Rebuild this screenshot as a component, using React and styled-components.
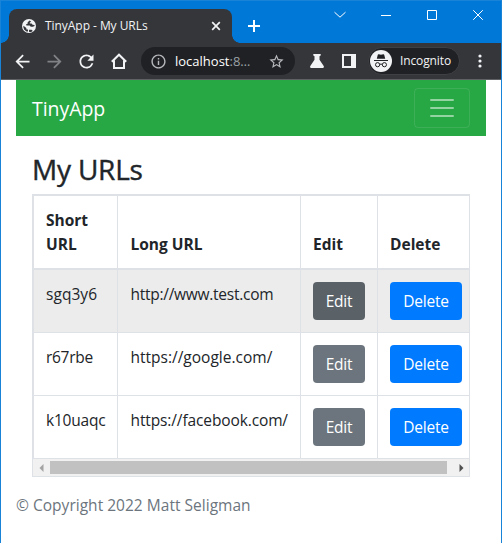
import React from 'react';
import styled, { createGlobalStyle } from 'styled-components';
import { MdArrowBack, MdArrowForward, MdInfoOutline, MdRefresh, MdStarBorder } from 'react-icons/md';

const GlobalStyle = createGlobalStyle`
  *, *::before, *::after { box-sizing: border-box; }
  body {
    margin: 0;
    overflow: hidden;
    font-family: "Open Sans", "Noto Sans", sans-serif;
    color: #212529;
    background: #fff;
  }
  svg { display: block; flex: none; }
`;

const Window = styled.div`
  display: flex;
  flex-direction: column;
  height: 543px;
  width: 502px;
  border: 1px solid #1883d7;
  border-bottom: 0;
`;

const TitleBar = styled.header`
  display: flex;
  height: 42px;
  flex: none;
  padding: 8px 0 0 8px;
  background: #0078d7;
`;

const Tab = styled.div`
  position: relative;
  display: flex;
  align-items: center;
  width: 223px;
  height: 34px;
  padding: 0 11px 0 13px;
  border-radius: 8px 8px 0 0;
  background: #35363a;
  color: #f1f3f4;

  &::before, &::after {
    content: "";
    position: absolute;
    bottom: 0;
    width: 8px;
    height: 8px;
  }
  &::before {
    left: -8px;
    background: radial-gradient(circle at 0 0, transparent 7.5px, #35363a 8px);
  }
  &::after {
    right: -8px;
    background: radial-gradient(circle at 100% 0, transparent 7.5px, #35363a 8px);
  }
`;

const TabTitle = styled.span`
  flex: 1;
  margin-left: 9px;
  font-size: 12px;
  line-height: 16px;
  letter-spacing: -0.05px;
  white-space: nowrap;
`;

const NewTab = styled.div`
  display: flex;
  align-items: center;
  height: 34px;
  margin-left: 16px;
`;

const WindowControls = styled.div`
  display: flex;
  gap: 34px;
  margin: -1px 0 0 auto;
  padding: 0 17px 0 0;
  height: 14px;
  align-items: center;
`;

const Toolbar = styled.div`
  display: flex;
  align-items: center;
  flex: none;
  height: 37px;
  padding-left: 10.5px;
  border-bottom: 1px solid #606164;
  background: #35363a;
  color: #f1f3f4;
`;

const NavIcons = styled.div`
  display: flex;
  align-items: center;
  gap: 10px;
`;

const ToolIcon = styled.span`
  display: grid;
  place-items: center;
  width: 22px;
  height: 22px;
  color: ${(p) => (p.$dim ? '#808286' : '#f1f3f4')};
`;

const AddressBar = styled.div`
  display: flex;
  align-items: center;
  width: 154px;
  height: 28px;
  margin-left: 11.5px;
  padding: 0 10px 0 9px;
  border-radius: 14px;
  background: #202124;
  color: #b6b9bd;
`;

const Address = styled.span`
  flex: 1;
  margin-left: 8px;
  font-size: 13px;
  line-height: 18px;
  color: #9aa0a6;
  white-space: nowrap;
  b { font-weight: 400; color: #fff; }
`;

const Extensions = styled.div`
  display: flex;
  align-items: center;
  gap: 18px;
  margin-left: 15px;
`;

const IncognitoPill = styled.div`
  display: flex;
  align-items: center;
  gap: 8px;
  width: 92px;
  height: 28px;
  margin-left: 12px;
  padding-left: 1px;
  border: 1px solid #3f4044;
  border-radius: 14px;
  background: #202124;
  font-size: 12px;
  line-height: 16px;
  letter-spacing: -0.12px;
`;

const MoreMenu = styled.span`
  margin-left: 17.5px;
`;

const Page = styled.main`
  flex: 1;
  padding: 0 15px;
  background: #fff;
`;

const Navbar = styled.nav`
  display: flex;
  align-items: center;
  justify-content: space-between;
  height: 56px;
  padding: 0 16px;
  background: #28a745;
`;

const Brand = styled.span`
  padding-top: 1px;
  color: #fff;
  font-size: 19.5px;
  line-height: 31px;
  letter-spacing: -0.05px;
`;

const Toggler = styled.button`
  display: grid;
  place-items: center;
  width: 56px;
  height: 40px;
  padding: 0;
  border: 1px solid rgba(255, 255, 255, 0.1);
  border-radius: 4px;
  background: transparent;
`;

const Content = styled.section`
  padding: 16px 16px 0;
`;

const Heading = styled.h3`
  margin: 0 0 8px;
  font-size: 28px;
  font-weight: 500;
  line-height: 34px;
  letter-spacing: -0.2px;
  -webkit-text-stroke: 0.4px currentColor;
`;

const TableFrame = styled.div`
  border: 1px solid #dee2e6;
`;

const Table = styled.div`
  border: solid #dee2e6;
  border-width: 1px 0 0 1px;
`;

const Row = styled.div`
  display: grid;
  grid-template-columns: 84px 183px 77px 91px;
  height: ${(p) => (p.$head ? 74 : 63)}px;
  border-bottom: ${(p) => (p.$head ? 2 : 1)}px solid #dee2e6;
  background: ${(p) => (p.$hover ? '#ececec' : '#fff')};
`;

const Cell = styled.div`
  padding: 12px 0 0 12px;
  border-right: 1px solid #dee2e6;
  font-size: 15.5px;
  line-height: 24px;
  letter-spacing: ${(p) => p.$track || 0}px;
  white-space: nowrap;
  &:nth-child(2) { padding-left: 12.5px; }
  &:last-child { border-right: 0; }
`;

const HeadCell = styled(Cell)`
  display: flex;
  align-items: flex-end;
  padding-bottom: 12px;
  font-weight: 700;
  white-space: normal;
`;

const Button = styled.button`
  display: block;
  width: ${(p) => (p.$primary ? 72 : 52)}px;
  height: 38px;
  padding: 0;
  border: 0;
  border-radius: 4px;
  background: ${(p) => (p.$primary ? '#007bff' : p.$active ? '#5a6268' : '#6c757d')};
  color: #fff;
  font: inherit;
  letter-spacing: -0.2px;
`;

const Scrollbar = styled.div`
  display: flex;
  align-items: center;
  height: 17px;
  padding: 0 5px 0 6px;
  background: #f1f1f1;
`;

const Thumb = styled.div`
  width: 397px;
  height: 13px;
  margin: 0 auto 0 6px;
  background: #c1c1c1;
`;

const Footer = styled.footer`
  margin-top: 16px;
  color: #6c757d;
  font-size: 15.5px;
  line-height: 24px;
  letter-spacing: 0.02px;
`;

const GlobeIcon = () => (
  <svg width="14" height="14" viewBox="0 0 14 14">
    <circle cx="7" cy="7" r="7" fill="#f1f3f4" />
    <path
      fill="#35363a"
      d="M7.6 1.6L5.7 3.2l-.1 1.5-1.5.6.3 1.2h3.2l1.2 1.3h2.1l1.6-.7V5.9l-1.9-.2-1-1.2-1.8.1V3.4l1.4-.6zM1.5 6.7l2.8 2.2.2 1.5 1.5.2v2H4.4L2.1 10.4 1.3 8zM7 10.8h2.6l1.2 1.1-1.7 1-2 .2z"
    />
  </svg>
);

const CloseTabIcon = () => (
  <svg width="10" height="10" viewBox="0 0 10 10" stroke="#f1f3f4" strokeWidth="1.7">
    <path d="M1.2 1.2l7.6 7.6M8.8 1.2L1.2 8.8" />
  </svg>
);

const PlusIcon = () => (
  <svg width="12" height="12" viewBox="0 0 12 12" stroke="#fff" strokeWidth="2">
    <path d="M0 6h12M6 0v12" />
  </svg>
);

const HomeIcon = () => (
  <svg width="16" height="16" viewBox="0 0 16 16" fill="none" stroke="currentColor" strokeWidth="2">
    <path d="M.8 8.8L8 1.7l7.2 7.1M3 7.5V15h10V7.5" />
  </svg>
);

const FlaskIcon = () => (
  <svg width="14" height="14" viewBox="0 0 14 14" fill="#f1f3f4">
    <path d="M3.3 0h7.4v1.5L9.5 2.2v3.6l4.2 6.1c.6 1-.1 2.1-1.3 2.1H1.6C.4 14-.3 12.9.3 11.9l4.2-6.1V2.2l-1.2-.7z" />
  </svg>
);

const PanelIcon = () => (
  <svg width="14" height="14" viewBox="0 0 14 14">
    <path fill="#f1f3f4" fillRule="evenodd" d="M0 0h14v14H0zM2 2v10h7V2z" />
  </svg>
);

const IncognitoIcon = () => (
  <svg width="22" height="22" viewBox="0 0 22 22">
    <circle cx="11" cy="11" r="11" fill="#f1f3f4" />
    <path fill="#202124" d="M7.8 4.8q.3-.8 1.1-.5l2.1.5 2.1-.5q.8-.3 1.1.5L15.2 8.8H6.8zM4 10h14v1H4z" />
    <g fill="none" stroke="#202124">
      <circle cx="7.6" cy="14.7" r="2.1" />
      <circle cx="14.4" cy="14.7" r="2.1" />
      <path d="M9.7 14.4q1.3-.7 2.6 0" />
    </g>
  </svg>
);

const MoreIcon = () => (
  <svg width="4" height="14" viewBox="0 0 4 14" fill="#f1f3f4">
    <circle cx="2" cy="2" r="1.6" />
    <circle cx="2" cy="7" r="1.6" />
    <circle cx="2" cy="12" r="1.6" />
  </svg>
);

const MenuIcon = () => (
  <svg width="30" height="30" viewBox="0 0 30 30" stroke="rgba(255,255,255,.5)" strokeWidth="2" strokeLinecap="round" strokeMiterlimit="10">
    <path d="M4 7h22M4 15h22M4 23h22" />
  </svg>
);

const controlPaths = [
  'M.5 3.2L6 8.2l5.5-5',
  'M1 6.5h10',
  'M1.5 1.5h9v9h-9z',
  'M1.2 1.2l9.6 9.6M10.8 1.2L1.2 10.8',
];

const ScrollArrow = ({ right }) => (
  <svg width="5" height="8" viewBox="0 0 5 8">
    {right ? <path fill="#505050" d="M.5 0v8l4-4z" /> : <path fill="#a3a3a3" d="M4.5 0v8l-4-4z" />}
  </svg>
);

const urls = [
  { id: 'sgq3y6', idTrack: 0.05, url: 'http://www.test.com', urlTrack: -0.27, active: true },
  { id: 'r67rbe', idTrack: -0.3, url: 'https://google.com/', urlTrack: 0 },
  { id: 'k10uaqc', idTrack: -0.2, url: 'https://facebook.com/', urlTrack: -0.12 },
];

export default function App() {
  return (
    <Window>
      <GlobalStyle />
      <TitleBar>
        <Tab>
          <GlobeIcon />
          <TabTitle>TinyApp - My URLs</TabTitle>
          <CloseTabIcon />
        </Tab>
        <NewTab><PlusIcon /></NewTab>
        <WindowControls>
          {controlPaths.map((d) => (
            <svg key={d} width="12" height="12" viewBox="0 0 12 12" fill="none" stroke="#fff">
              <path d={d} />
            </svg>
          ))}
        </WindowControls>
      </TitleBar>

      <Toolbar>
        <NavIcons>
          <ToolIcon><MdArrowBack size={21} /></ToolIcon>
          <ToolIcon $dim><MdArrowForward size={21} /></ToolIcon>
          <ToolIcon><MdRefresh size={21} /></ToolIcon>
          <ToolIcon><HomeIcon /></ToolIcon>
        </NavIcons>
        <AddressBar>
          <MdInfoOutline size={17} />
          <Address><b>localhost</b>:8…</Address>
          <MdStarBorder size={17} />
        </AddressBar>
        <Extensions>
          <FlaskIcon />
          <PanelIcon />
        </Extensions>
        <IncognitoPill>
          <IncognitoIcon />
          Incognito
        </IncognitoPill>
        <MoreMenu><MoreIcon /></MoreMenu>
      </Toolbar>

      <Page>
        <Navbar>
          <Brand>TinyApp</Brand>
          <Toggler aria-label="Toggle navigation"><MenuIcon /></Toggler>
        </Navbar>
        <Content>
          <Heading>My URLs</Heading>
          <TableFrame>
            <Table>
              <Row $head>
                <HeadCell>Short URL</HeadCell>
                <HeadCell>Long URL</HeadCell>
                <HeadCell>Edit</HeadCell>
                <HeadCell>Delete</HeadCell>
              </Row>
              {urls.map((u) => (
                <Row key={u.id} $hover={u.active}>
                  <Cell $track={u.idTrack}>{u.id}</Cell>
                  <Cell $track={u.urlTrack}>{u.url}</Cell>
                  <Cell><Button $active={u.active}>Edit</Button></Cell>
                  <Cell><Button $primary>Delete</Button></Cell>
                </Row>
              ))}
            </Table>
            <Scrollbar>
              <ScrollArrow />
              <Thumb />
              <ScrollArrow right />
            </Scrollbar>
          </TableFrame>
        </Content>
        <Footer>© Copyright 2022 Matt Seligman</Footer>
      </Page>
    </Window>
  );
}
